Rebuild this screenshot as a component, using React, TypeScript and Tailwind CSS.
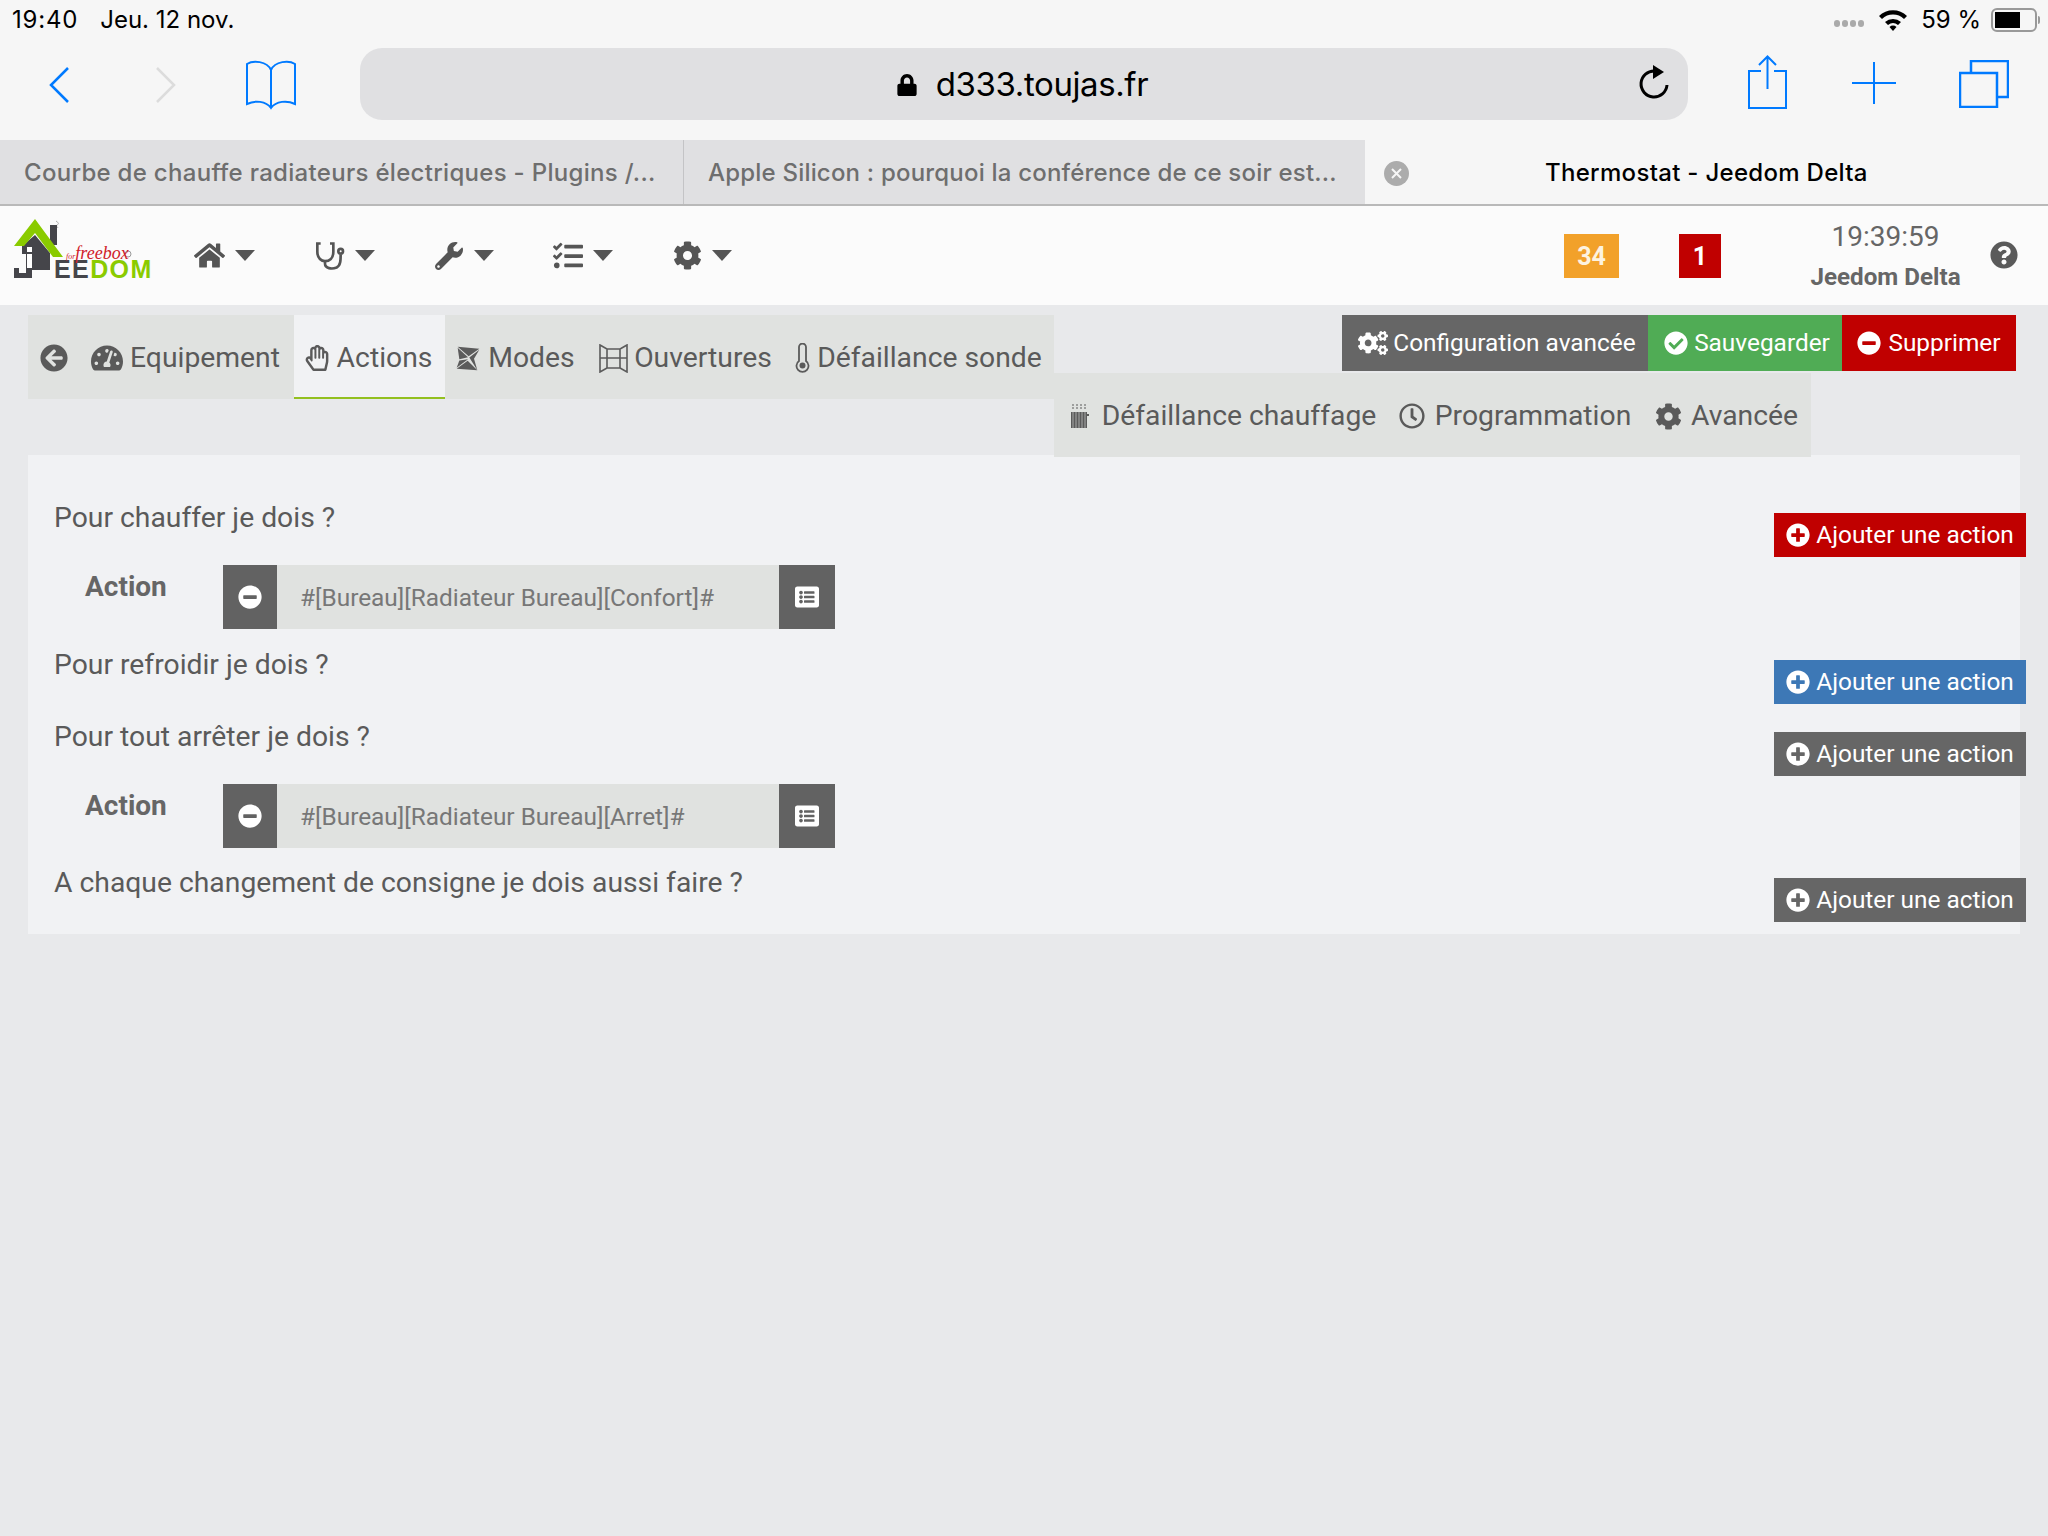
import React from "react";
import {
  FaHome, FaWrench, FaTasks, FaCog, FaCogs, FaCheckCircle, FaMinusCircle, FaPlusCircle,
  FaArrowCircleLeft, FaTachometerAlt, FaRegHandPaper, FaRegClock, FaListAlt, FaQuestionCircle, FaLock,
} from "react-icons/fa";

const BLUE = "#007aff";

function Caret() {
  return (
    <svg width="20" height="11" viewBox="0 0 20 11" className="shrink-0"><path d="M0 0h20L10 11z" fill="#555" /></svg>
  );
}

function NavItem({ icon, w }: { icon: React.ReactNode; w: string }) {
  return (
    <div className={`flex items-center ${w}`}>
      {icon}
      <Caret />
    </div>
  );
}

function StethIcon() {
  return (
    <svg width="30" height="32" viewBox="45 40 90 95" fill="none" stroke="#555" strokeWidth="8" className="shrink-0">
      <path d="M62 50H52v25c0 20 13 28 23 28 13 0 25-8 25-28V50H90" />
      <path d="M75 103v7c0 15 20 18 35 12 12-6 12-22 12-40" />
      <circle cx="122" cy="73" r="7" />
    </svg>
  );
}

function ModesIcon() {
  return (
    <svg width="24" height="25" viewBox="50 28 72 74" fill="#5b5b5b" className="shrink-0">
      <path d="M55 30l65 6-32 22z" />
      <path d="M55 33l31 28-26 6z" />
      <path d="M120 39l-16 27 10 34-24-38z" />
      <path d="M114 100L85 72 52 96z" />
      <path d="M52 93l8-22 26-4z" />
    </svg>
  );
}

function WindowIcon() {
  return (
    <svg width="29" height="29" viewBox="0 0 29 29" fill="none" stroke="#5b5b5b" strokeWidth="1.600" className="shrink-0">
      <path d="M1 1l7 4v19l-7 4zM28 1l-7 4v19l7 4zM8 5h13M8 24h13M1 14h27" />
    </svg>
  );
}

function ThermoIcon() {
  return (
    <svg width="15" height="30" viewBox="0 0 15 30" fill="none" stroke="#5b5b5b" strokeWidth="1.800" className="shrink-0">
      <path d="M4 4a3.500 3.500 0 017 0v14a6 6 0 11-7 0z" />
      <circle cx="7.500" cy="22.500" r="3" fill="#5b5b5b" stroke="none" />
    </svg>
  );
}

function RadiatorIcon() {
  return (
    <svg width="19" height="24" viewBox="0 0 19 24" fill="#5b5b5b" className="shrink-0">
      <path d="M1 8h16v16H1z" />
      <path d="M17 10h2v2h-2z" />
      <path d="M3 8v16M6 8v16M9 8v16M12 8v16M15 8v16" stroke="#e0e2e0" strokeWidth="0.600" />
      <path d="M3 0v5M7 0v5M11 0v5M15 0v5" stroke="#5b5b5b" strokeWidth="1" strokeDasharray="2 1" />
    </svg>
  );
}

function Tab({ icon, label, active, gap = "gap-[7px]", w }: { icon: React.ReactNode; label?: string; active?: boolean; gap?: string; w: string }) {
  return (
    <div className={`flex h-full items-center justify-center border-b-2 pt-[4px] ${gap} ${w} ${active ? "border-[#93c01f] bg-[#f1f2f4]" : "border-transparent"}`}>
      {icon}
      {label ? <span className="text-[28.3px] leading-none text-[#5a5a5a]">{label}</span> : null}
    </div>
  );
}

function ActionBtn({ color }: { color: string }) {
  return (
    <div className={`mt-[16px] -mr-[6px] flex h-[44px] w-[252px] items-center justify-center gap-[6px] text-[24.4px] text-white ${color}`}>
      <FaPlusCircle className="shrink-0 text-[24px]" />
      <span>Ajouter une action</span>
    </div>
  );
}

function Question({ text }: { text: string }) {
  return <span className="h-[42px] leading-[42px]">{text}</span>;
}

function ActionRow({ value, mb }: { value: string; mb: string }) {
  return (
    <div className={`flex h-[64px] ${mb}`}>
      <div className="w-[169px] pl-[31px] pt-[1px] text-[28px] font-bold text-[#666]">Action</div>
      <div className="flex w-[612px]">
        <div className="flex w-[54px] items-center justify-center bg-[#626262]">
          <FaMinusCircle className="text-[24px] text-white" />
        </div>
        <div className="flex flex-1 items-center bg-[#e0e2e0] pl-[23px] pt-[2px] text-[24.4px] text-[#777]">{value}</div>
        <div className="flex w-[56px] items-center justify-center bg-[#626262]">
          <FaListAlt className="text-[24px] text-white" />
        </div>
      </div>
    </div>
  );
}

function Logo() {
  return (
    <div className="relative mt-[4px] h-[80px] w-[170px] shrink-0 self-start">
      <svg width="170" height="80" viewBox="0 0 170 80" className="absolute left-0 top-0">
        <path d="M56 11c3 2 3 3 1 4s1 2 1 3" fill="none" stroke="#aaa" strokeWidth="1" />
        <rect x="50" y="15" width="7" height="20" fill="#45454a" />
        <path d="M22 36l13-11 15 18v17H32v8H14V58h12V44h-4z" fill="#45454a" />
        <path d="M35 9l28 38H53L35 23 24 36H14z" fill="#8acb00" />
        <rect x="27" y="37" width="5" height="5" fill="#fff" />
        <rect x="27" y="44" width="5" height="14" fill="#fff" />
        <rect x="19" y="58" width="7" height="5" fill="#fbfbfb" />
        <circle cx="128" cy="44" r="3" fill="none" stroke="#999" strokeWidth="1" />
      </svg>
      <span className="absolute left-[54px] top-[49px] font-['Liberation_Sans',sans-serif] text-[25px] font-bold leading-[20px] tracking-[1.4px] text-[#45454a]">
        EE<span className="text-[#8acb00]">DOM</span>
      </span>
      <span className="absolute left-[66px] top-[37px] font-['Liberation_Serif',serif] text-[18px] italic leading-[12px] text-[#d0202a]">
        <span className="text-[8px]">for</span>freebox
      </span>
    </div>
  );
}

export default function App() {
  return (
    <div className="flex min-h-[1536px] w-[2048px] flex-col overflow-hidden bg-[#e8e9eb] font-['Roboto',sans-serif]">
      {/* Status bar and toolbar */}
      <div className="flex h-[140px] flex-col bg-[#f6f6f6]">
        <div className="flex h-[40px] items-center justify-between pl-[12px] pr-[8px] font-['Inter',sans-serif] text-[24px] text-black">
          <div className="flex gap-[22px]">
            <span className="tracking-[0.8px]">19:40</span>
            <span>Jeu. 12 nov.</span>
          </div>
          <div className="flex items-center">
            <div className="mr-[14px] mt-[6px] flex gap-[2px]">
              {[0, 1, 2, 3].map((i) => (
                <span key={i} className="h-[7px] w-[6px] rounded-full bg-[#aaa]" />
              ))}
            </div>
            <svg width="30" height="22" viewBox="0 0 30 22" className="mr-[13px]">
              <path d="M1 7a20 20 0 0128 0l-3 3a16 16 0 00-22 0z" />
              <path d="M7 13a12 12 0 0116 0l-3 3a8 8 0 00-10 0z" />
              <path d="M11.500 18a5 5 0 017 0L15 22z" />
            </svg>
            <span>59 %</span>
            <div className="ml-[10px] flex h-[24px] w-[46px] items-center rounded-[6px] border-2 border-[#999] p-[2px]">
              <div className="h-full w-[25px] bg-black" />
            </div>
            <div className="ml-[1px] h-[8px] w-[2px] rounded-r bg-[#999]" />
          </div>
        </div>
        <div className="flex items-start pt-[8px]">
          <div className="flex h-[72px] w-[360px] items-center">
            <svg width="24" height="38" viewBox="0 0 24 38" fill="none" stroke={BLUE} strokeWidth="2.500" className="ml-[48px] mt-[2px]">
              <path d="M20 2L3 19l17 17" />
            </svg>
            <svg width="24" height="38" viewBox="0 0 24 38" fill="none" stroke="#dcdcdc" strokeWidth="2.500" className="ml-[81px] mt-[2px]">
              <path d="M4 2l17 17L4 36" />
            </svg>
            <svg width="52" height="50" viewBox="0 0 52 50" fill="none" stroke={BLUE} strokeWidth="2" className="ml-[68px] mt-[2px]">
              <path d="M26 10C22 1 8 0 2 4v40c8-4 19-3 24 4 5-7 16-8 24-4V4C44 0 30 1 26 10zM26 10v38" />
            </svg>
          </div>
          <div className="flex h-[72px] w-[1328px] items-center rounded-[22px] bg-[#e0e0e2] pr-[18px]">
            <div className="flex flex-1 items-center justify-center gap-[18px] pl-[48px] pt-[1px]">
              <FaLock className="text-[22px] text-black" />
              <span className="font-['Inter',sans-serif] text-[33px] tracking-[-0.4px] text-black">d333.toujas.fr</span>
            </div>
            <svg width="34" height="38" viewBox="0 0 34 38" fill="none" stroke="#000" strokeWidth="3">
              <path d="M19 6a13 13 0 1012 14" />
              <path d="M17 0l11 7-11 7z" fill="#000" stroke="none" />
            </svg>
          </div>
          <div className="flex h-[72px] flex-1 items-center">
            <svg width="40" height="54" viewBox="0 0 40 54" fill="none" stroke={BLUE} strokeWidth="2" className="-mt-[5px] ml-[60px]">
              <path d="M13 16H1v37h37V16H26M19.500 34V2M11 10l8.500-8.500L28 10" />
            </svg>
            <svg width="44" height="44" viewBox="0 0 44 44" fill="none" stroke={BLUE} strokeWidth="2" className="-mt-[1px] ml-[64px]">
              <path d="M22 0v42M0 21h44" />
            </svg>
            <svg width="50" height="48" viewBox="0 0 50 48" fill="none" stroke={BLUE} strokeWidth="2.500" className="-mt-[1px] ml-[63px]">
              <path d="M1 13h37v34H1zM12 13V1h37v36H39" />
            </svg>
          </div>
        </div>
      </div>

      {/* Browser tabs */}
      <div className="flex h-[66px] border-b-2 border-[#b9b9b9] bg-[#f6f6f6] font-['Inter',sans-serif] text-[24px] font-medium">
        <div className="flex w-[684px] items-center border-r border-[#c4c4c6] bg-[#e0e0e2] pl-[24px] pt-[2px] text-[#6e6e6e]">
          <span className="whitespace-nowrap tracking-[0.3px]">Courbe de chauffe radiateurs électriques - Plugins /...</span>
        </div>
        <div className="flex w-[681px] items-center bg-[#e0e0e2] pl-[24px] pt-[2px] text-[#6e6e6e]">
          <span className="whitespace-nowrap tracking-[0.2px]">Apple Silicon : pourquoi la conférence de ce soir est...</span>
        </div>
        <div className="flex flex-1 items-center pt-[2px]">
          <div className="ml-[19px] flex h-[25px] w-[25px] items-center justify-center rounded-full bg-[#acacac]">
            <svg width="13" height="13" viewBox="0 0 13 13" stroke="#f6f6f6" strokeWidth="2">
              <path d="M2 2l9 9M11 2l-9 9" />
            </svg>
          </div>
          <span className="ml-[136px] whitespace-nowrap tracking-[0.3px] text-black">Thermostat - Jeedom Delta</span>
        </div>
      </div>

      {/* Jeedom header */}
      <div className="flex h-[99px] items-center bg-[#fbfbfb]">
        <Logo />
        <div className="ml-[24px] flex">
          <NavItem w="w-[121px] gap-[10px]" icon={<FaHome className="text-[31px] text-[#555]" />} />
          <NavItem w="w-[120px] gap-[10px]" icon={<StethIcon />} />
          <NavItem w="w-[118px] gap-[11px]" icon={<FaWrench className="text-[28px] text-[#555]" />} />
          <NavItem w="w-[120px] gap-[10px]" icon={<FaTasks className="text-[30px] text-[#555]" />} />
          <NavItem w="w-[70px] gap-[10px]" icon={<FaCog className="text-[29px] text-[#555]" />} />
        </div>
        <div className="ml-auto flex items-center">
          <div className="flex h-[44px] w-[55px] items-center justify-center bg-[#f2a12a] pt-[2px] text-[25px] font-bold text-[#fdf3e0]">34</div>
          <div className="ml-[60px] flex h-[44px] w-[42px] items-center justify-center bg-[#c00000] pt-[2px] text-[25px] font-bold text-white">1</div>
          <div className="flex w-[269px] flex-col items-center pl-[60px]">
            <span className="text-[28px] leading-[36px] text-[#666]">19:39:59</span>
            <span className="mt-[6px] text-[24.2px] font-bold leading-[32px] text-[#666]">Jeedom Delta</span>
          </div>
          <FaQuestionCircle className="mb-[1px] mr-[30px] text-[28px] text-[#5a5a5a]" />
        </div>
      </div>

      {/* Tabs and buttons */}
      <div className="flex items-start pl-[28px] pr-[32px] pt-[10px]">
        <div className="flex h-[84px] w-[1026px] shrink-0 items-center bg-[#e0e2e0]">
          <Tab w="w-[52px]" icon={<FaArrowCircleLeft className="text-[28px] text-[#5a5a5a]" />} gap="gap-0" />
          <Tab w="w-[214px] pr-[3px]" icon={<FaTachometerAlt className="text-[32px] text-[#5a5a5a]" />} label="Equipement" />
          <Tab w="w-[151px] pr-[3px]" active icon={<FaRegHandPaper className="text-[26px] text-[#5a5a5a]" />} label="Actions" />
          <Tab w="w-[144px] pr-[3px]" icon={<ModesIcon />} label="Modes" gap="gap-[8px]" />
          <Tab w="w-[194px] pr-[1px]" icon={<WindowIcon />} label="Ouvertures" gap="gap-[6px]" />
          <Tab w="w-[271px]" icon={<ThermoIcon />} label="Défaillance sonde" />
        </div>
        <div className="flex flex-1 flex-col">
          <div className="flex h-[56px] justify-end text-[24.4px] text-white">
            <div className="flex w-[306px] items-center justify-center gap-[5px] bg-[#666] pl-[4px]">
              <FaCogs className="text-[30px]" />
              <span>Configuration avancée</span>
            </div>
            <div className="flex w-[194px] items-center justify-center gap-[6px] bg-[#50ac55] pl-[4px]">
              <FaCheckCircle className="text-[24px]" />
              <span>Sauvegarder</span>
            </div>
            <div className="flex w-[174px] items-center justify-center gap-[7px] bg-[#c00000]">
              <FaMinusCircle className="text-[24px]" />
              <span>Supprimer</span>
            </div>
          </div>
          <div className="relative z-10 mt-[2px] flex h-[84px] w-[757px] items-center bg-[#e0e2e0]">
            <Tab w="w-[338px]" icon={<RadiatorIcon />} label="Défaillance chauffage" gap="gap-[13px]" />
            <Tab w="w-[246px]" icon={<FaRegClock className="text-[26px] text-[#5a5a5a]" />} label="Programmation" gap="gap-[10px]" />
            <Tab w="w-[173px] pl-[4px]" icon={<FaCog className="text-[27px] text-[#5a5a5a]" />} label="Avancée" gap="gap-[9px]" />
          </div>
        </div>
      </div>

      {/* Panel */}
      <div className="-mt-[2px] ml-[28px] w-[1992px] bg-[#f1f2f4] pl-[26px] pt-[42px] text-[28.3px] text-[#5a5a5a]">
        <div className="flex h-[68px] items-start justify-between">
          <Question text="Pour chauffer je dois ?" />
          <ActionBtn color="bg-[#c00000]" />
        </div>
        <ActionRow value="#[Bureau][Radiateur Bureau][Confort]#" mb="mb-[15px]" />
        <div className="flex h-[72px] items-start justify-between">
          <Question text="Pour refroidir je dois ?" />
          <ActionBtn color="bg-[#3d78b6]" />
        </div>
        <div className="flex h-[68px] items-start justify-between">
          <Question text="Pour tout arrêter je dois ?" />
          <ActionBtn color="bg-[#666]" />
        </div>
        <ActionRow value="#[Bureau][Radiateur Bureau][Arret]#" mb="mb-[14px]" />
        <div className="flex h-[72px] items-start justify-between">
          <Question text="A chaque changement de consigne je dois aussi faire ?" />
          <ActionBtn color="bg-[#666]" />
        </div>
      </div>
    </div>
  );
}
